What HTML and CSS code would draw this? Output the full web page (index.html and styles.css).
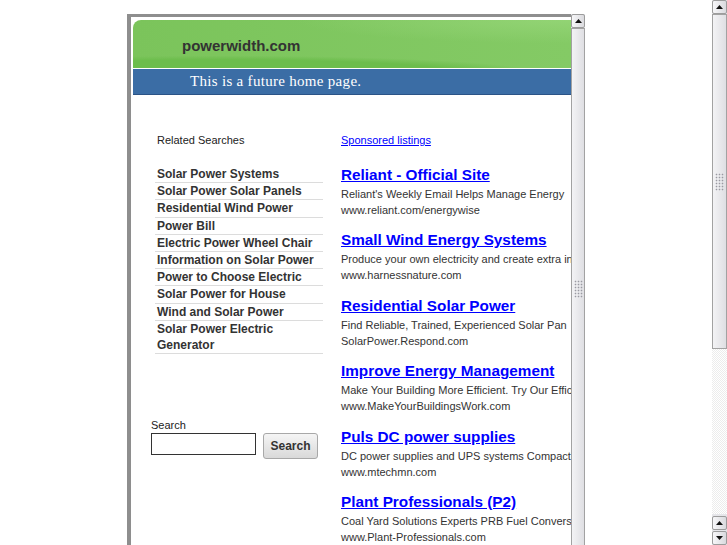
FILE: index.html
```html
<!DOCTYPE html>
<html lang="en">
<head>
    <meta charset="UTF-8">
    <title>powerwidth.com</title>
    <link rel="stylesheet" href="styles.css">
</head>
<body>
    <div class="window">
        <div class="page">
            <div class="frame">
                <div class="viewport">
                    <div class="banner">
                        <div class="banner-top"><h1>powerwidth.com</h1></div>
                        <div class="banner-bottom"><p>This is a future home page.</p></div>
                    </div>
                    <div class="content">
                        <div class="related">
                            <h2>Related Searches</h2>
                            <ul class="related-list">
                                <li><a href="#">Solar Power Systems</a></li>
                                <li><a href="#">Solar Power Solar Panels</a></li>
                                <li><a href="#">Residential Wind Power</a></li>
                                <li><a href="#">Power Bill</a></li>
                                <li><a href="#">Electric Power Wheel Chair</a></li>
                                <li><a href="#">Information on Solar Power</a></li>
                                <li><a href="#">Power to Choose Electric</a></li>
                                <li><a href="#">Solar Power for House</a></li>
                                <li><a href="#">Wind and Solar Power</a></li>
                                <li><a href="#">Solar Power Electric Generator</a></li>
                            </ul>
                            <form class="search">
                                <label for="q">Search</label>
                                <div class="search-row">
                                    <input id="q" type="text">
                                    <button type="button">Search</button>
                                </div>
                            </form>
                        </div>
                        <div class="sponsored">
                            <a class="sponsored-head" href="#">Sponsored listings</a>
                            <div class="ad">
                                <a href="#">Reliant - Official Site</a>
                                <p>Reliant's Weekly Email Helps Manage Energy</p>
                                <p>www.reliant.com/energywise</p>
                            </div>
                            <div class="ad">
                                <a href="#">Small Wind Energy Systems</a>
                                <p>Produce your own electricity and create extra in</p>
                                <p>www.harnessnature.com</p>
                            </div>
                            <div class="ad">
                                <a href="#">Residential Solar Power</a>
                                <p>Find Reliable, Trained, Experienced Solar Pan</p>
                                <p>SolarPower.Respond.com</p>
                            </div>
                            <div class="ad">
                                <a href="#">Improve Energy Management</a>
                                <p>Make Your Building More Efficient. Try Our Effic</p>
                                <p>www.MakeYourBuildingsWork.com</p>
                            </div>
                            <div class="ad">
                                <a href="#">Puls DC power supplies</a>
                                <p>DC power supplies and UPS systems Compact</p>
                                <p>www.mtechmn.com</p>
                            </div>
                            <div class="ad">
                                <a href="#">Plant Professionals (P2)</a>
                                <p>Coal Yard Solutions Experts PRB Fuel Convers</p>
                                <p>www.Plant-Professionals.com</p>
                            </div>
                        </div>
                    </div>
                </div>
                <div class="scrollbar inner-scroll">
                    <div class="arrow"><svg width="7" height="4" viewBox="0 0 7 4"><polygon points="3.5,0 7,4 0,4" fill="#111"/></svg></div>
                    <div class="thumb"><span class="grip"></span></div>
                </div>
            </div>
        </div>
        <div class="scrollbar page-scroll">
            <div class="arrow"><svg width="7" height="4" viewBox="0 0 7 4"><polygon points="3.5,0 7,4 0,4" fill="#111"/></svg></div>
            <div class="thumb"><span class="grip"></span></div>
            <div class="track"></div>
            <div class="arrow"><svg width="7" height="4" viewBox="0 0 7 4"><polygon points="3.5,0 7,4 0,4" fill="#111"/></svg></div>
            <div class="arrow arrow-last"><svg width="7" height="4" viewBox="0 0 7 4"><polygon points="0,0 7,0 3.5,4" fill="#111"/></svg></div>
        </div>
    </div>
</body>
</html>
```

FILE: styles.css
```css
body {
    margin: 0;
    background-color: #fff;
    font-family: "Liberation Sans", Arial, sans-serif;
    overflow: hidden;
}

.window {
    display: flex;
    height: 545px;
}

.page {
    flex: 1;
    padding: 14px 0 0 127px;
    overflow: hidden;
}

.frame {
    display: flex;
    width: 458px;
    height: 560px;
}

.viewport {
    flex: 1;
    min-width: 0;
    border-top: 3px solid #8e8e8e;
    border-left: 4px solid #8e8e8e;
    padding: 3px 0 0 2px;
    overflow: hidden;
}

/* header image */
.banner-top {
    height: 48px;
    border-top-left-radius: 8px;
    background:
        radial-gradient(ellipse 90% 70% at 100% 0%, rgba(150, 214, 120, 0.8), transparent 70%),
        radial-gradient(ellipse 120% 60% at 20% 110%, #6cbd4c 0%, #6cbd4c 45%, transparent 60%),
        linear-gradient(to right, #7bc45b, #84ca65);
}

.banner-top h1 {
    margin: 0;
    padding: 4px 0 0 49px;
    line-height: 44px;
    font-size: 15px;
    font-weight: bold;
    color: #333;
}

.banner-bottom {
    height: 25px;
    border-top: 1px solid #fff;
    border-bottom: 1px solid #2b5386;
    background-color: #3b6da5;
}

.banner-bottom p {
    margin: 0;
    padding-left: 57px;
    line-height: 25px;
    font-family: "Liberation Serif", "Times New Roman", serif;
    font-size: 15px;
    letter-spacing: 0.3px;
    color: #fff;
}

.content {
    display: flex;
    padding-top: 37px;
}

.related {
    flex: none;
    width: 172px;
    margin-left: 18px;
}

.related h2 {
    margin: 0 0 18px 6px;
    font-size: 11px;
    font-weight: normal;
    line-height: 16px;
    color: #222;
}

.related-list {
    list-style: none;
    margin: 0 0 0 4px;
    padding: 0;
}

.related-list li {
    border-bottom: 1px solid #dcdcdc;
}

.related-list a {
    display: block;
    padding-left: 2px;
    font-size: 12px;
    font-weight: bold;
    line-height: 16.2px;
    color: #333;
    text-decoration: none;
}

.search {
    margin-top: 64px;
}

.search label {
    display: block;
    font-size: 11px;
    line-height: 15px;
    color: #222;
}

.search-row {
    display: flex;
    align-items: flex-start;
}

.search input {
    box-sizing: border-box;
    width: 105px;
    height: 22px;
    margin: 0;
    border: 1px solid #333;
}

.search button {
    box-sizing: border-box;
    width: 55px;
    height: 26px;
    margin-left: 7px;
    border: 1px solid #a8a8a8;
    border-radius: 3px;
    background: linear-gradient(#f5f5f5, #d9d9d9);
    font-family: inherit;
    font-size: 12px;
    font-weight: bold;
    color: #333;
}

.sponsored {
    flex: none;
    margin-left: 18px;
}

.sponsored-head {
    display: block;
    margin-bottom: 15px;
    font-size: 11px;
    line-height: 16px;
    color: #00f;
}

.ad {
    margin-bottom: 10.4px;
}

.ad a {
    display: block;
    font-size: 15.3px;
    font-weight: bold;
    line-height: 23px;
    color: #00f;
}

.ad p {
    margin: 0;
    font-size: 11px;
    line-height: 16px;
    color: #333;
    white-space: nowrap;
}

/* scrollbars */
.scrollbar {
    display: flex;
    flex-direction: column;
    flex: none;
    background-color: #e6e6ea;
}

.inner-scroll {
    width: 14px;
}

.page-scroll {
    width: 15px;
    height: 545px;
}

.arrow {
    flex: none;
    box-sizing: border-box;
    height: 14px;
    border: 1px solid #9c9c9c;
    border-radius: 2px;
    background: linear-gradient(to right, #f7f7f9, #dadade);
    display: flex;
    align-items: center;
    justify-content: center;
}

.arrow-last {
    margin-top: 1px;
}

.thumb {
    box-sizing: border-box;
    border: 1px solid #a2a2a2;
    background: linear-gradient(to right, #f3f3f5, #dfdfe3);
}

.inner-scroll .thumb {
    flex: 1;
}

.page-scroll .thumb {
    flex: none;
    height: 335px;
}

.grip {
    display: block;
    width: 9px;
    height: 18px;
    margin: 0 auto;
    background: radial-gradient(circle, #9a9aa2 0.7px, transparent 1.1px) 0 0 / 3px 3px;
}

.inner-scroll .grip {
    margin-top: 251px;
}

.page-scroll .grip {
    margin-top: 158px;
}

.track {
    flex: 1;
    margin-bottom: 2px;
    background: repeating-conic-gradient(#ececec 0 25%, #fff 0 50%) 0 0 / 2px 2px;
}
```
